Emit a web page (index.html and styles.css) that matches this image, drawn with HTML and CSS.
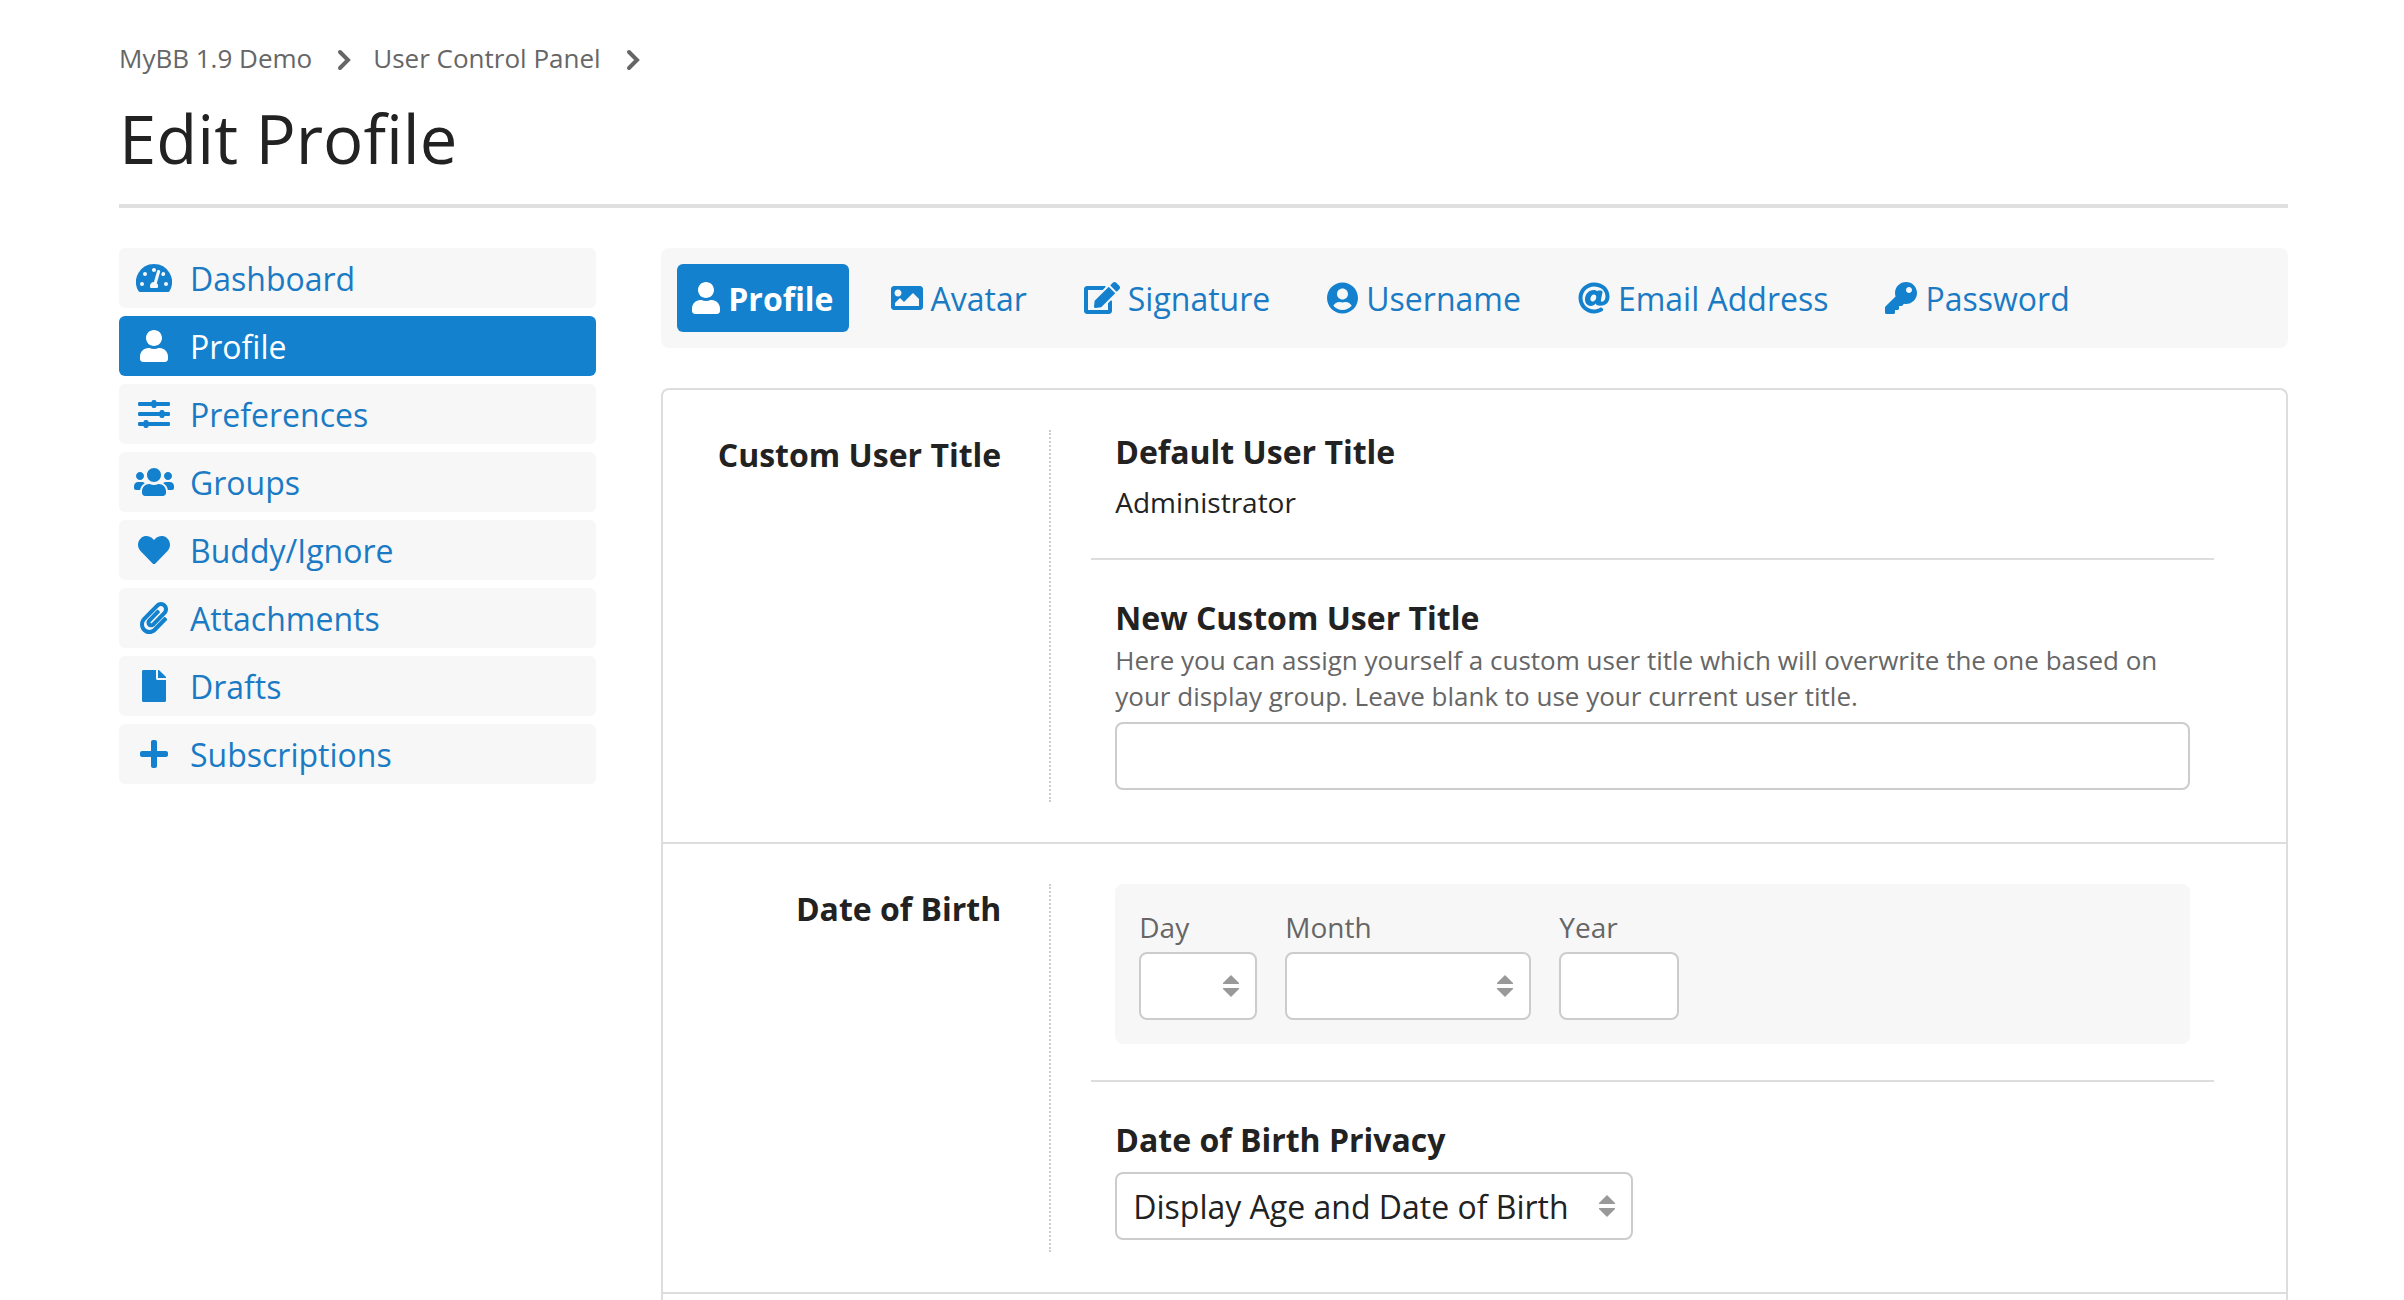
FILE: index.html
```html
<!DOCTYPE html>
<html lang="en">
<head>
<meta charset="utf-8">
<title>Edit Profile</title>
<link rel="stylesheet" href="styles.css">
</head>
<body>
<div class="page">
  <header class="page-header">
    <nav class="breadcrumb" aria-label="Breadcrumb">
      <a href="#">MyBB 1.9 Demo</a>
      <svg class="chevron" viewBox="0 0 14 22"><path d="M3 3l8 8-8 8"/></svg>
      <a href="#">User Control Panel</a>
      <svg class="chevron" viewBox="0 0 14 22"><path d="M3 3l8 8-8 8"/></svg>
    </nav>
    <h1 class="page-title">Edit Profile</h1>
  </header>

  <div class="columns">
    <nav class="side-nav" aria-label="User control panel">
      <a class="side-link" href="#"><span class="side-icon"><svg class="icon" viewBox="0 0 36 32"><path fill-rule="evenodd" d="M18 2A18 18 0 0 0 2.4 29c.4.7 1.1 1 1.7 1h27.8c.7 0 1.4-.4 1.7-1A18 18 0 0 0 18 2zM6 20a2 2 0 1 1 0 4 2 2 0 0 1 0-4zM9 10a2 2 0 1 1 0 4 2 2 0 0 1 0-4zM18 6c1.1 0 2 .9 2 2s-.9 2-2 2-2-.9-2-2 .9-2 2-2zM22.900 8.100a1.500 1.500 0 0 1 1.200 1.900L20.800 21.200c1.600 1.300 1.600 3.300.7 4.800h-7c-1.400-2.700.2-6 3.400-6l3.200-10.900c.2-.7 1-1.100 1.800-1zM27.200 10a2 2 0 1 1 0 4c-1 0-1.800-.6-1.900-1.500l.5-1.700c.3-.5.8-.8 1.400-.8zM30 20a2 2 0 1 1 0 4 2 2 0 0 1 0-4z"/></svg></span>Dashboard</a>
      <a class="side-link active" href="#" aria-current="page"><span class="side-icon"><svg class="icon" viewBox="0 0 448 512"><path d="M224 256c70.700 0 128-57.300 128-128S294.700 0 224 0 96 57.300 96 128s57.300 128 128 128zm89.600 32h-16.700c-22.200 10.200-46.900 16-72.900 16s-50.600-5.800-72.900-16h-16.700C60.200 288 0 348.200 0 422.400V464c0 26.500 21.500 48 48 48h352c26.500 0 48-21.500 48-48v-41.600c0-74.200-60.200-134.400-134.400-134.400z"/></svg></span>Profile</a>
      <a class="side-link" href="#"><span class="side-icon"><svg class="icon" viewBox="0 0 32 32"><rect x="0" y="4" width="32" height="4" rx="1.200"/><rect x="0" y="14" width="32" height="4" rx="1.200"/><rect x="0" y="24" width="32" height="4" rx="1.200"/><rect x="13.500" y="2" width="5" height="8" rx="2"/><rect x="21.500" y="12" width="5" height="8" rx="2"/><rect x="5.500" y="22" width="5" height="8" rx="2"/></svg></span>Preferences</a>
      <a class="side-link" href="#"><span class="side-icon"><svg class="icon" viewBox="0 0 640 512"><path d="M96 224c35.300 0 64-28.700 64-64s-28.700-64-64-64-64 28.700-64 64 28.700 64 64 64zm448 0c35.300 0 64-28.700 64-64s-28.700-64-64-64-64 28.700-64 64 28.700 64 64 64zm32 32h-64c-17.600 0-33.500 7.100-45.100 18.600 40.300 22.100 68.900 62 75.100 109.400h66c17.700 0 32-14.300 32-32v-32c0-35.300-28.700-64-64-64zm-256 0c61.900 0 112-50.100 112-112S381.900 32 320 32 208 82.100 208 144s50.100 112 112 112zm76.800 32h-8.300c-20.800 10-43.900 16-68.500 16s-47.600-6-68.500-16h-8.300C179.600 288 128 339.600 128 403.200V432c0 26.500 21.500 48 48 48h288c26.500 0 48-21.500 48-48v-28.800c0-63.600-51.600-115.200-115.200-115.200zm-223.700-13.400C161.500 263.100 145.600 256 128 256H64c-35.300 0-64 28.700-64 64v32c0 17.700 14.300 32 32 32h65.900c6.300-47.400 34.900-87.300 75.200-109.400z"/></svg></span>Groups</a>
      <a class="side-link" href="#"><span class="side-icon"><svg class="icon" viewBox="0 0 512 512"><path d="M462.300 62.600C407.500 15.900 326 24.300 275.700 76.200L256 96.500l-19.700-20.300C186.100 24.300 104.500 15.900 49.700 62.600c-62.800 53.600-66.100 149.800-9.900 207.900l193.500 199.800c12.500 12.900 32.800 12.900 45.300 0l193.500-199.800c56.300-58.100 53-154.300-9.800-207.900z"/></svg></span>Buddy/Ignore</a>
      <a class="side-link" href="#"><span class="side-icon"><svg class="icon" viewBox="0 0 448 512"><path d="M43.246 466.142c-58.430-60.289-57.341-157.511 1.386-217.581L254.392 34c44.316-45.332 116.351-45.336 160.671 0 43.890 44.894 43.943 117.329 0 162.276L232.214 383.128c-29.855 30.537-78.633 30.111-107.982-.998-28.275-29.970-27.368-77.473 1.452-106.953l143.743-146.835c6.182-6.314 16.312-6.422 22.626-.241l22.861 22.379c6.315 6.182 6.422 16.312.241 22.626L171.427 319.927c-4.932 5.045-5.236 13.428-.648 18.292 4.372 4.634 11.245 4.711 15.688.165l182.849-186.851c19.613-20.062 19.613-52.725-.011-72.798-19.189-19.627-49.957-19.637-69.154 0L90.390 293.295c-34.763 35.560-35.299 93.120-1.191 128.313 34.010 35.093 88.985 35.137 123.058.286l172.060-175.999c6.177-6.319 16.307-6.433 22.626-.256l22.877 22.364c6.319 6.177 6.434 16.307.256 22.626l-172.060 175.998c-59.576 60.938-155.943 60.216-214.770-.485z"/></svg></span>Attachments</a>
      <a class="side-link" href="#"><span class="side-icon"><svg class="icon" viewBox="0 0 384 512"><path d="M224 136V0H24C10.700 0 0 10.700 0 24v464c0 13.300 10.700 24 24 24h336c13.300 0 24-10.700 24-24V160H248c-13.200 0-24-10.800-24-24zm160-14.100v6.100H256V0h6.100c6.400 0 12.500 2.500 17 7l97.900 98c4.500 4.500 7 10.600 7 16.900z"/></svg></span>Drafts</a>
      <a class="side-link" href="#"><span class="side-icon"><svg class="icon" viewBox="0 0 448 512"><path d="M416 208H272V64c0-17.670-14.330-32-32-32h-32c-17.670 0-32 14.330-32 32v144H32c-17.670 0-32 14.330-32 32v32c0 17.670 14.330 32 32 32h144v144c0 17.670 14.330 32 32 32h32c17.670 0 32-14.330 32-32V304h144c17.670 0 32-14.330 32-32v-32c0-17.670-14.330-32-32-32z"/></svg></span>Subscriptions</a>
    </nav>

    <main class="content">
      <nav class="tabs" aria-label="Profile sections">
        <a class="tab active" href="#" aria-current="page"><svg class="icon" viewBox="0 0 448 512"><path d="M224 256c70.700 0 128-57.300 128-128S294.700 0 224 0 96 57.300 96 128s57.300 128 128 128zm89.600 32h-16.700c-22.200 10.200-46.900 16-72.900 16s-50.600-5.800-72.900-16h-16.700C60.200 288 0 348.200 0 422.400V464c0 26.500 21.500 48 48 48h352c26.500 0 48-21.500 48-48v-41.600c0-74.200-60.200-134.400-134.400-134.400z"/></svg>Profile</a>
        <a class="tab" href="#"><svg class="icon" viewBox="0 0 512 512"><path d="M464 448H48c-26.510 0-48-21.490-48-48V112c0-26.510 21.490-48 48-48h416c26.510 0 48 21.490 48 48v288c0 26.510-21.490 48-48 48zM112 120c-30.928 0-56 25.072-56 56s25.072 56 56 56 56-25.072 56-56-25.072-56-56-56zM64 384h384V272l-87.515-87.515c-4.686-4.686-12.284-4.686-16.971 0L208 320l-55.515-55.515c-4.686-4.686-12.284-4.686-16.971 0L64 336v48z"/></svg>Avatar</a>
        <a class="tab" href="#"><svg class="icon" viewBox="0 0 576 512"><path d="M402.600 83.200l90.200 90.200c3.800 3.800 3.800 10 0 13.800L274.400 405.600l-92.800 10.300c-12.400 1.400-22.900-9.100-21.500-21.500l10.300-92.800L388.800 83.200c3.800-3.800 10-3.800 13.800 0zm162-22.900l-48.800-48.800c-15.200-15.200-39.900-15.200-55.200 0l-35.400 35.400c-3.800 3.800-3.800 10 0 13.800l90.200 90.200c3.800 3.800 10 3.800 13.800 0l35.400-35.400c15.200-15.300 15.200-40 0-55.200zM384 346.200V448H64V128h229.800c3.200 0 6.200-1.300 8.500-3.500l40-40c7.600-7.600 2.200-20.500-8.500-20.500H48C21.500 64 0 85.500 0 112v352c0 26.500 21.500 48 48 48h352c26.500 0 48-21.500 48-48V306.200c0-10.700-12.900-16-20.500-8.500l-40 40c-2.200 2.300-3.500 5.300-3.500 8.500z"/></svg>Signature</a>
        <a class="tab" href="#"><svg class="icon" viewBox="0 0 496 512"><path d="M248 8C111 8 0 119 0 256s111 248 248 248 248-111 248-248S385 8 248 8zm0 96c48.600 0 88 39.400 88 88s-39.400 88-88 88-88-39.400-88-88 39.400-88 88-88zm0 344c-58.700 0-111.300-26.600-146.500-68.200 18.800-35.400 55.600-59.800 98.500-59.800 2.400 0 4.800.4 7.100 1.100 13 4.200 26.600 6.900 40.900 6.900 14.300 0 28-2.700 40.900-6.900 2.300-.7 4.700-1.100 7.100-1.100 42.900 0 79.700 24.400 98.500 59.800C359.300 421.400 306.700 448 248 448z"/></svg>Username</a>
        <a class="tab" href="#"><svg class="icon" viewBox="0 0 512 512"><path d="M256 8C118.941 8 8 118.919 8 256c0 137.059 110.919 248 248 248 48.154 0 95.342-14.140 135.408-40.223 12.005-7.815 14.625-24.288 5.552-35.372l-10.177-12.433c-7.671-9.371-21.179-11.667-31.373-5.129C325.920 429.757 291.314 440 256 440c-101.458 0-184-82.542-184-184S154.542 72 256 72c100.139 0 184 57.619 184 160 0 38.786-21.093 79.742-58.170 83.693-17.349-.454-16.910-12.857-13.476-30.024l23.433-121.110C394.653 149.750 383.308 136 368.225 136h-44.981a13.518 13.518 0 0 0-13.432 11.993l-.01.092c-14.697-17.901-40.448-21.775-59.971-21.775-74.580 0-137.831 62.234-137.831 151.460 0 65.303 36.785 105.870 96 105.870 26.984 0 57.369-15.637 74.991-38.333 9.522 34.104 40.613 34.104 70.706 34.104C462.609 379.410 504 307.798 504 232 504 95.653 394.023 8 256 8zm-21.680 304.430c-22.249 0-36.070-15.623-36.070-40.771 0-44.993 30.779-72.729 58.630-72.729 22.292 0 35.601 15.241 35.601 40.770 0 45.061-33.875 72.730-58.161 72.730z"/></svg>Email Address</a>
        <a class="tab" href="#"><svg class="icon" viewBox="0 0 512 512"><path d="M512 176.001C512 273.203 433.202 352 336 352c-11.220 0-22.190-1.062-32.827-3.069l-24.012 27.014A23.999 23.999 0 0 1 261.223 384H224v40c0 13.255-10.745 24-24 24h-40v40c0 13.255-10.745 24-24 24H24c-13.255 0-24-10.745-24-24v-78.059c0-6.365 2.529-12.470 7.029-16.971l161.802-161.802C163.108 213.814 160 195.271 160 176 160 78.798 238.797.001 335.999 0 433.488-.001 512 78.511 512 176.001zM336 128c0 26.510 21.490 48 48 48s48-21.490 48-48-21.490-48-48-48-48 21.490-48 48z"/></svg>Password</a>
      </nav>

      <form class="card">
        <section class="section">
          <h2 class="section-title">Custom User Title</h2>
          <div class="fields">
            <div class="field">
              <h3 class="field-title">Default User Title</h3>
              <p class="field-value">Administrator</p>
            </div>
            <div class="field">
              <label class="field-title" for="user-title">New Custom User Title</label>
              <p class="field-help" id="user-title-help">Here you can assign yourself a custom user title which will overwrite the one based on your display group. Leave blank to use your current user title.</p>
              <input class="control" id="user-title" type="text" aria-describedby="user-title-help">
            </div>
          </div>
        </section>

        <section class="section">
          <h2 class="section-title">Date of Birth</h2>
          <div class="fields">
            <div class="field">
              <div class="date-group">
                <div class="date-part day">
                  <label class="date-label" for="day">Day</label>
                  <div class="select"><select class="control" id="day"><option></option><option>1</option><option>2</option></select><svg class="arrows" viewBox="0 0 16 22"><path d="M8 0l8 8v1H0v-1zM8 22l8-8v-1H0v1z"/></svg></div>
                </div>
                <div class="date-part month">
                  <label class="date-label" for="month">Month</label>
                  <div class="select"><select class="control" id="month"><option></option><option>January</option><option>February</option></select><svg class="arrows" viewBox="0 0 16 22"><path d="M8 0l8 8v1H0v-1zM8 22l8-8v-1H0v1z"/></svg></div>
                </div>
                <div class="date-part year">
                  <label class="date-label" for="year">Year</label>
                  <input class="control" id="year" type="text">
                </div>
              </div>
            </div>
            <div class="field">
              <label class="field-title" for="privacy">Date of Birth Privacy</label>
              <div class="select privacy"><select class="control" id="privacy"><option>Display Age and Date of Birth</option></select><svg class="arrows" viewBox="0 0 16 22"><path d="M8 0l8 8v1H0v-1zM8 22l8-8v-1H0v1z"/></svg></div>
            </div>
          </div>
        </section>
      </form>
    </main>
  </div>
</div>
</body>
</html>
```
FILE: styles.css
```css
*,
*::before,
*::after {
  box-sizing: border-box;
}

body {
  margin: 0;
  background: #fff;
  color: #222;
  font-family: "Open Sans", "Noto Sans", sans-serif;
  font-size: 32px;
}

h1,
h2,
h3,
p {
  margin: 0;
}

a {
  color: #1a7bc4;
  text-decoration: none;
}

.page {
  display: flex;
  flex-direction: column;
  min-height: 100vh;
  padding: 40px 116px 0 119px;
}

.page-header {
  padding-bottom: 22px;
  border-bottom: 4px solid #e0e0e0;
}

.breadcrumb {
  display: flex;
  align-items: center;
  font-size: 26px;
  line-height: 36px;
}

.breadcrumb a {
  color: #666;
}

.chevron {
  width: 14px;
  height: 22px;
  margin: 4px 22px 0 25px;
  fill: none;
  stroke: #666;
  stroke-width: 4;
  stroke-linecap: round;
}

.page-title {
  margin-top: 18px;
  font-size: 67px;
  font-weight: 400;
  line-height: 88px;
}

.columns {
  display: flex;
  flex: 1;
  justify-content: space-between;
  padding-top: 40px;
}

.icon {
  display: block;
  flex: none;
  height: 32px;
  fill: #1481ce;
}

.side-nav {
  display: flex;
  flex-direction: column;
  gap: 8px;
  width: 22%;
}

.side-link {
  display: flex;
  align-items: center;
  height: 60px;
  padding: 0 15px;
  gap: 16px;
  border-radius: 6px;
  background: #f7f7f7;
}

.side-icon {
  display: flex;
  justify-content: center;
  width: 40px;
}

.side-link.active,
.tab.active {
  background: #1481ce;
  color: #fff;
}

.active .icon {
  fill: #fff;
}

.content {
  display: flex;
  flex-direction: column;
  gap: 40px;
  width: 75%;
}

.tabs {
  display: flex;
  gap: 27px;
  padding: 16px;
  border-radius: 8px;
  background: #f7f7f7;
}

.tab {
  display: flex;
  align-items: center;
  gap: 8px;
  height: 68px;
  padding: 0 15px;
  border-radius: 6px;
}

.tab.active {
  font-weight: 700;
}

.card {
  flex: 1;
  border: 2px solid #ddd;
  border-bottom: 0;
  border-radius: 8px 8px 0 0;
}

.section {
  display: flex;
  gap: 40px;
  padding: 40px 72px 40px 0;
  border-bottom: 2px solid #ddd;
}

.section-title {
  flex: none;
  width: 388px;
  padding-right: 48px;
  border-right: 2px dotted #ccc;
  font-size: 32px;
  font-weight: 700;
  line-height: 50px;
  text-align: right;
}

.fields {
  flex: 1;
}

.field {
  padding: 36px 24px;
}

.field:first-child {
  padding-top: 0;
}

.field:last-child {
  padding-bottom: 12px;
}

.field + .field {
  border-top: 2px solid #ddd;
}

.field-title {
  display: block;
  font-size: 32px;
  font-weight: 700;
  line-height: 44px;
}

.field-value {
  margin-top: 8px;
  font-size: 28px;
  line-height: 40px;
}

.field-help {
  margin: 2px 0 8px;
  color: #666;
  font-size: 26px;
  line-height: 36px;
}

.control {
  display: block;
  width: 100%;
  height: 68px;
  margin: 0;
  padding: 0 16px;
  border: 2px solid #ccc;
  border-radius: 8px;
  background: #fff;
  color: #222;
  font: inherit;
  appearance: none;
}

.select {
  position: relative;
}

.arrows {
  position: absolute;
  top: 23px;
  right: 18px;
  width: 16px;
  height: 22px;
  fill: #999;
  pointer-events: none;
}

.date-group {
  display: flex;
  gap: 28px;
  padding: 24px;
  border-radius: 8px;
  background: #f7f7f7;
}

.date-label {
  display: block;
  margin-bottom: 6px;
  color: #666;
  font-size: 28px;
  line-height: 38px;
}

.day {
  width: 118px;
}

.month {
  width: 246px;
}

.year {
  width: 120px;
}

.privacy {
  width: 518px;
  margin-top: 10px;
}
```
